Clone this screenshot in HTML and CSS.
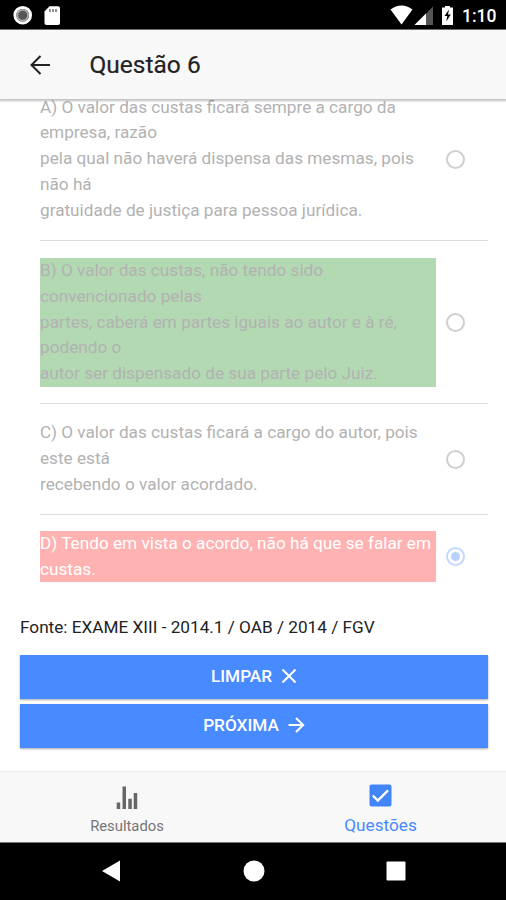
FILE: index.html
```
<!DOCTYPE html>
<html lang="pt-BR">

<head>
    <meta charset="UTF-8" />
    <meta name="viewport" content="width=device-width, initial-scale=1" />
    <title>Questão 6</title>
    <link rel="stylesheet" href="styles.css">
</head>

<body>

    <div class="status-bar">
        <svg class="status-left" width="64" height="30" viewBox="0 0 64 30">
            <circle cx="22.7" cy="15.2" r="7.8" fill="none" stroke="#fff" stroke-width="3" />
            <circle cx="22.7" cy="15.2" r="6.3" fill="#aaa" />
            <circle cx="22.7" cy="15.2" r="4.5" fill="#555" />
            <path d="M49.5 6.2H58a2 2 0 0 1 2 2V23a2 2 0 0 1-2 2H46.500a2 2 0 0 1-2-2V11.500z" fill="#fff" />
            <path d="M50 9v3M53 9v3M56 9v3" stroke="#555" stroke-width="1.300" />
        </svg>
        <svg class="status-right" width="68" height="30" viewBox="0 0 68 30">
            <path d="M0.500 9.500Q11.500 1.500 22.500 9.500L11.500 24.500z" fill="#fff" />
            <path d="M43 6.500V25H24.500z" fill="#555" />
            <path d="M36 13.500V25H24.500z" fill="#fff" />
            <path d="M52 7.500h3V6h5v1.500h3V25H52z" fill="#fff" />
            <path d="M59 9.500l-4.500 6.500h2.800l-1 5.500 4.500-7h-2.800z" fill="#000" />
        </svg>
        <span class="clock">1:10</span>
    </div>

    <header class="header">
        <svg width="22" height="22" viewBox="0 0 22 22" fill="none" stroke="#222" stroke-width="2">
            <path d="M21 11H2.500M11.500 2L2.500 11l9 9" />
        </svg>
        <h1>Questão 6</h1>
    </header>

    <main class="content">
        <div class="options">
            <label class="option">
                <span class="option-text">A) O valor das custas ficará sempre a cargo da<br>empresa, razão<br>pela qual não haverá dispensa das mesmas, pois<br>não há<br>gratuidade de justiça para pessoa jurídica.</span>
                <span class="radio"></span>
            </label>
            <label class="option">
                <span class="option-text correct">B) O valor das custas, não tendo sido<br>convencionado pelas<br>partes, caberá em partes iguais ao autor e à ré,<br>podendo o<br>autor ser dispensado de sua parte pelo Juiz.</span>
                <span class="radio"></span>
            </label>
            <label class="option">
                <span class="option-text">C) O valor das custas ficará a cargo do autor, pois<br>este está<br>recebendo o valor acordado.</span>
                <span class="radio"></span>
            </label>
            <label class="option">
                <span class="option-text wrong">D) Tendo em vista o acordo, não há que se falar em<br>custas.</span>
                <span class="radio checked"></span>
            </label>
        </div>

        <p class="source">Fonte: EXAME XIII - 2014.1 / OAB / 2014 / FGV</p>

        <div class="buttons">
            <button>
                <span class="btn-clear">LIMPAR</span>
                <svg width="16" height="16" viewBox="0 0 16 16" stroke="#fff" stroke-width="2">
                    <path d="M1.500 1.500l13 13M14.500 1.500l-13 13" />
                </svg>
            </button>
            <button>
                <span class="btn-next">PRÓXIMA</span>
                <svg width="17" height="16" viewBox="0 0 17 16" fill="none" stroke="#fff" stroke-width="2">
                    <path d="M0.500 8H15M8 1l7.200 7L8 15" />
                </svg>
            </button>
        </div>
    </main>

    <nav class="tabs">
        <a class="tab">
            <svg width="22" height="24" viewBox="0 0 22 24" fill="#666">
                <path d="M0.700 16.500h3.500V23H0.700zM6.500 0.500H10V23H6.500zM12.300 12.800h3.500V23h-3.500zM17.700 7h3.500v16h-3.500z" />
            </svg>
            <span class="tab-results">Resultados</span>
        </a>
        <a class="tab active">
            <svg width="23" height="23" viewBox="0 0 23 23">
                <rect x="0.500" y="0.500" width="22" height="22" rx="2" fill="#4285f8" />
                <path d="M3.800 11.500l5 5L19 6.300" fill="none" stroke="#fff" stroke-width="2.400" />
            </svg>
            <span class="tab-questions">Questões</span>
        </a>
    </nav>

    <div class="nav-bar">
        <svg width="20" height="22" viewBox="0 0 20 22" fill="#fff">
            <path d="M1 11L19 0.500v21z" />
        </svg>
        <svg width="22" height="22" viewBox="0 0 22 22" fill="#fff">
            <circle cx="11" cy="11" r="10.500" />
        </svg>
        <svg width="20" height="20" viewBox="0 0 20 20" fill="#fff">
            <rect x="0.500" y="0.500" width="19" height="19" rx="1" />
        </svg>
    </div>

</body>

</html>
```
FILE: styles.css
```
* {
    box-sizing: border-box;
}

body {
    display: flex;
    flex-direction: column;
    width: 506px;
    height: 900px;
    margin: 0;
    overflow: hidden;
    font-family: Roboto, sans-serif;
    background: #fff;
}

svg {
    display: block;
    flex: none;
}

.status-bar {
    display: flex;
    align-items: center;
    flex: none;
    height: 30px;
    padding-right: 9px;
    border-bottom: 1px solid #777;
    background: #000;
    color: #fff;
}

.status-right {
    margin-left: auto;
    margin-right: 4px;
}

.clock {
    width: 35px;
    padding-top: 2px;
    font-size: 17.5px;
    font-weight: 500;
    white-space: nowrap;
}

.header {
    position: relative;
    display: flex;
    align-items: center;
    flex: none;
    height: 69px;
    padding-left: 29px;
    background: #f8f8f8;
    box-shadow: 0 1px 2px 1px rgba(0, 0, 0, 0.25);
}

.header h1 {
    margin: 0 0 0 38.5px;
    font-size: 24.5px;
    font-weight: 400;
    -webkit-text-stroke: 0.2px #222;
    color: #222;
}

.content {
    flex: 1;
    min-height: 0;
    overflow: hidden;
}

.options {
    margin: -21.5px 18px 0 40px;
}

.option {
    display: flex;
    align-items: center;
    padding: 17px 0 16.5px;
    border-bottom: 1px solid #dedede;
}

.option:nth-child(3) {
    padding: 16px 0;
}

.option:last-child {
    padding: 16px 0;
    border-bottom: none;
}

.option-text {
    width: 396px;
    font-size: 17.2px;
    line-height: 25.8px;
    white-space: nowrap;
    color: #b2b2b2;
}

.correct {
    background: #b2d9b2;
}

.wrong {
    background: #ffb2b2;
    color: #fff;
}

.radio {
    display: flex;
    align-items: center;
    justify-content: center;
    width: 19px;
    height: 19px;
    margin: 1px 0 0 10px;
    border: 2px solid #cfcfcf;
    border-radius: 50%;
}

.radio.checked {
    margin-top: 0;
    border-color: #c3d7ff;
}

.radio.checked::after {
    content: "";
    width: 9px;
    height: 9px;
    border-radius: 50%;
    background: #b8d0ff;
}

.source {
    margin: 17px 20px 0;
    font-size: 17.2px;
    line-height: 24px;
    white-space: nowrap;
    color: #222;
}

.buttons {
    display: flex;
    flex-direction: column;
    gap: 5px;
    margin: 16px 18px 0 20px;
}

button {
    display: flex;
    align-items: center;
    justify-content: center;
    height: 44px;
    padding: 0 0 2px;
    border: none;
    background: #488aff;
    box-shadow: 0 1px 2px rgba(0, 0, 0, 0.35);
    color: #fff;
    font-family: inherit;
    font-size: 17.2px;
    font-weight: 500;
}

button svg {
    margin-left: 9px;
}

.tabs {
    display: flex;
    flex: none;
    height: 71px;
    border-top: 1px solid #eee;
    background: #f8f8f8;
}

.tab {
    display: flex;
    flex-direction: column;
    align-items: center;
    width: 50%;
    padding: 14px 0 0 1px;
    color: #757575;
    font-size: 14.8px;
    line-height: 20px;
}

.tab-results {
    margin-top: 6px;
}

.tab.active {
    padding-top: 12px;
    padding-left: 2px;
    color: #488aff;
    font-size: 17.2px;
}

.tab-questions {
    margin-top: 8px;
}

.nav-bar {
    display: flex;
    align-items: center;
    flex: none;
    gap: 121.5px;
    height: 58px;
    padding: 0 0 1px 101px;
    border-top: 1px solid #777;
    background: #000;
}
```
